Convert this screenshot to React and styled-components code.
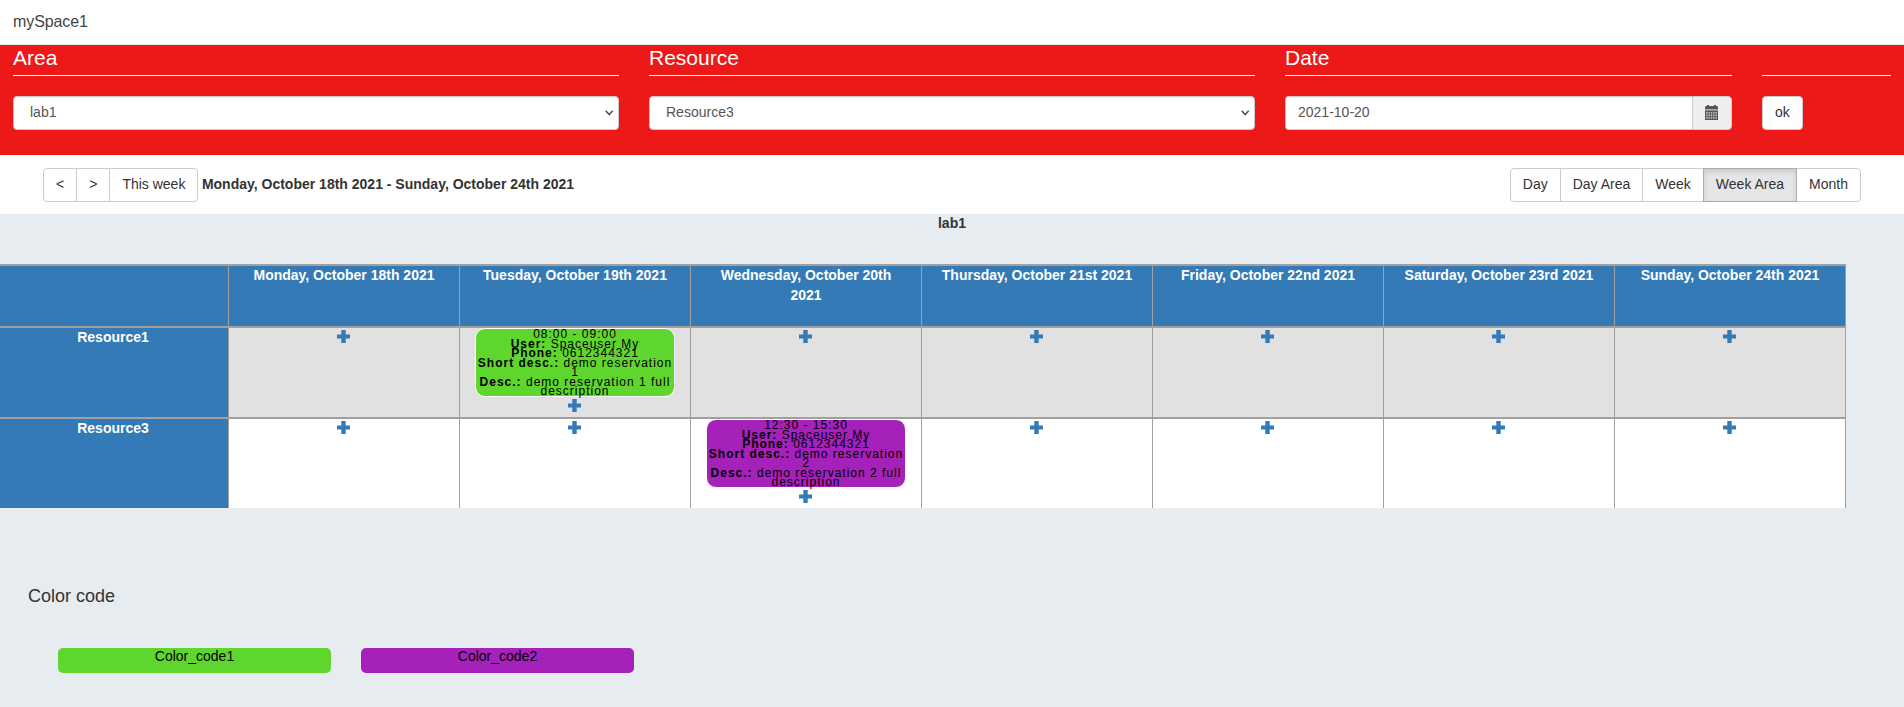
import React from "react";
import styled, { createGlobalStyle, css } from "styled-components";

const Global = createGlobalStyle`
  *, *::before, *::after { box-sizing: border-box; }
  html { background: #e7ecf0; }
  body {
    margin: 0;
    overflow: hidden;
    background: #e7ecf0;
    color: #333;
    font: 14px/20px "Liberation Sans", Arial, sans-serif;
  }
`;

const Header = styled.header`
  height: 45px;
  padding: 12px 13px 0;
  background: #fff;
  border-bottom: 1px solid #e7e7e7;
  color: #444;
  font-size: 16px;
  letter-spacing: -0.1px;
`;

const FilterBar = styled.section`
  display: grid;
  grid-template-columns: 606px 606px 447px 129px;
  column-gap: 30px;
  align-content: start;
  height: 110px;
  padding: 0 13px;
  background: #ed1818;
`;

const Filter = styled.div`
  display: flex;
  flex-direction: column;
  align-items: stretch;
`;

const FilterTitle = styled.h2`
  height: 31px;
  margin: 0 0 20px;
  padding-top: 1px;
  border-bottom: 1px solid #fff;
  color: #fff;
  font-size: 21px;
  font-weight: 400;
  line-height: 23px;
`;

const control = css`
  height: 34px;
  padding: 5px 12px 7px;
  border: 1px solid #ccc;
  border-radius: 4px;
  background: #fff;
  font: 14px/20px "Liberation Sans", Arial, sans-serif;
`;

const SelectBox = styled.div`
  display: grid;
  grid-template-columns: 1fr 14px;
  > svg {
    grid-area: 1 / 2;
    align-self: center;
    pointer-events: none;
  }
`;

const Select = styled.select`
  ${control}
  grid-area: 1 / 1 / 2 / 3;
  appearance: none;
  padding-left: 16px;
  color: #555;
  box-shadow: inset 0 1px 1px rgba(0, 0, 0, 0.075);
`;

const InputGroup = styled.div`
  display: flex;
`;

const DateInput = styled.input`
  ${control}
  flex: 1;
  min-width: 0;
  color: #555;
  border-right: 0;
  border-radius: 4px 0 0 4px;
  box-shadow: inset 0 1px 1px rgba(0, 0, 0, 0.075);
`;

const Addon = styled.span`
  width: 40px;
  height: 34px;
  padding: 8px 0 0 12px;
  border: 1px solid #ccc;
  border-radius: 0 4px 4px 0;
  background: #eee;
  svg { display: block; }
`;

const Button = styled.button`
  ${control}
  align-self: flex-start;
  color: #333;
  white-space: nowrap;
  ${(p) => p.$active && css`
    position: relative;
    background: #e6e6e6;
    border-color: #adadad;
    box-shadow: inset 0 3px 5px rgba(0, 0, 0, 0.125);
  `}
`;

const ButtonGroup = styled.div`
  display: flex;
  ${Button} + ${Button} { margin-left: -1px; }
  ${Button}:not(:first-child) { border-top-left-radius: 0; border-bottom-left-radius: 0; }
  ${Button}:not(:last-child) { border-top-right-radius: 0; border-bottom-right-radius: 0; }
`;

const Toolbar = styled.nav`
  display: flex;
  align-items: flex-start;
  gap: 3.500px;
  height: 59px;
  padding: 13px 43px 0;
  background: #fff;
`;

const Period = styled.strong`
  flex: 1;
  padding-top: 6px;
`;

const AreaTitle = styled.div`
  height: 50px;
  line-height: 18px;
  text-align: center;
  font-weight: 700;
`;

const Schedule = styled.div`
  display: grid;
  grid-template-columns: 229px repeat(7, 231px);
  grid-template-rows: 64px 91px 89px;
  width: 1846px;
`;

const Cell = styled.div`
  display: flex;
  flex-direction: column;
  align-items: center;
  border-right: 1px solid #a0a0a0;
  border-bottom: ${(p) => (p.$last ? 0 : 2)}px solid #a0a0a0;
  background: ${(p) => (p.$shaded ? "#e1e1e1" : "#fff")};
`;

const HeadCell = styled(Cell)`
  padding: 0 15px;
  border-top: ${(p) => (p.$day ? 2 : 0)}px solid #a0a0a0;
  background: #337ab7;
  color: #fff;
  font-weight: 700;
  text-align: center;
`;

const HeadLabel = styled.span`
  margin-top: -1px;
`;

const ResourceLabel = styled(HeadLabel)`
  margin-right: 2px;
`;

const AddLink = styled.a`
  display: block;
  width: 14px;
  height: 20px;
  padding-top: 2px;
  svg { display: block; }
`;

const Booking = styled.div`
  width: 200px;
  height: 69px;
  padding-top: 1px;
  border: 1px solid #fff;
  border-radius: 10px;
  background: ${(p) => p.$color};
  color: #000;
  font-size: 12px;
  line-height: 9.5px;
  letter-spacing: 1px;
  text-align: center;
`;

const Legend = styled.section`
  padding: 78px 28px 0;
`;

const LegendTitle = styled.h3`
  margin: 0;
  height: 42px;
  border-bottom: 1px solid #eee;
  font-size: 18px;
  font-weight: 400;
  line-height: 20px;
`;

const LegendItems = styled.div`
  display: flex;
  gap: 30px;
  padding: 20px 30px 0;
`;

const Swatch = styled.div`
  width: 273px;
  height: 25px;
  border-radius: 5px;
  background: ${(p) => p.$color};
  color: #000;
  line-height: 16px;
  text-align: center;
`;

const GREEN = "#5fd62e";
const PURPLE = "#a521ba";

const days = [
  "Monday, October 18th 2021",
  "Tuesday, October 19th 2021",
  "Wednesday, October 20th 2021",
  "Thursday, October 21st 2021",
  "Friday, October 22nd 2021",
  "Saturday, October 23rd 2021",
  "Sunday, October 24th 2021",
];

const resources = [
  { name: "Resource1", day: 1, time: "08:00 - 09:00", n: 1, color: GREEN },
  { name: "Resource3", day: 2, time: "12:30 - 15:30", n: 2, color: PURPLE },
];

const views = ["Day", "Day Area", "Week", "Week Area", "Month"];

const PlusIcon = () => (
  <svg width="14" height="14" viewBox="0 0 14 14" fill="#337ab7">
    <path d="M4.300 0h4.400v4.600H13v3.900H8.700V13H4.300V8.500H0V4.600h4.300z" />
  </svg>
);

const ChevronIcon = () => (
  <svg width="9" height="6" viewBox="0 0 9 6" fill="none" stroke="#555" strokeWidth="1.600">
    <path d="M0.700 0.800L4.200 4.500L7.700 0.800" />
  </svg>
);

const CalendarIcon = () => (
  <svg width="14" height="15" viewBox="0 0 14 15">
    <path fill="#555" d="M1 1h1V0h2v1h5V0h2v1h1l1 1v2H0V2z" />
    <path fill="#aaa" d="M0 4h13v1.500H0z" />
    <path fill="#555" d="M0 5.500h13V15H0z" />
    {[7.200, 9.700, 12.200].map((y) =>
      [1.200, 3.500, 5.800, 8.100, 10.400].map((x) => (
        <rect key={`${x}-${y}`} x={x} y={y} width="1.400" height="1.400" fill="#ddd" />
      ))
    )}
  </svg>
);

function BookingCard({ item }) {
  return (
    <Booking $color={item.color}>
      {item.time}<br />
      <b>User:</b> Spaceuser My<br />
      <b>Phone:</b> 0612344321<br />
      <b>Short desc.:</b> demo reservation {item.n}<br />
      <b>Desc.:</b> demo reservation {item.n} full description
    </Booking>
  );
}

function SelectFilter({ title, value }) {
  return (
    <Filter>
      <FilterTitle>{title}</FilterTitle>
      <SelectBox>
        <Select><option>{value}</option></Select>
        <ChevronIcon />
      </SelectBox>
    </Filter>
  );
}

export default function App() {
  return (
    <>
      <Global />
      <Header>mySpace1</Header>
      <FilterBar>
        <SelectFilter title="Area" value="lab1" />
        <SelectFilter title="Resource" value="Resource3" />
        <Filter>
          <FilterTitle>Date</FilterTitle>
          <InputGroup>
            <DateInput defaultValue="2021-10-20" />
            <Addon><CalendarIcon /></Addon>
          </InputGroup>
        </Filter>
        <Filter>
          <FilterTitle />
          <Button>ok</Button>
        </Filter>
      </FilterBar>
      <Toolbar>
        <ButtonGroup>
          <Button>&lt;</Button>
          <Button>&gt;</Button>
          <Button>This week</Button>
        </ButtonGroup>
        <Period>Monday, October 18th 2021 - Sunday, October 24th 2021</Period>
        <ButtonGroup>
          {views.map((v) => <Button key={v} $active={v === "Week Area"}>{v}</Button>)}
        </ButtonGroup>
      </Toolbar>
      <AreaTitle>lab1</AreaTitle>
      <Schedule>
        <HeadCell $day />
        {days.map((d) => <HeadCell key={d} $day><HeadLabel>{d}</HeadLabel></HeadCell>)}
        {resources.map((r, row) => (
          <React.Fragment key={r.name}>
            <HeadCell $last={row === 1}><ResourceLabel>{r.name}</ResourceLabel></HeadCell>
            {days.map((d, col) => (
              <Cell key={d} $shaded={row === 0} $last={row === 1}>
                {col === r.day && <BookingCard item={r} />}
                <AddLink><PlusIcon /></AddLink>
              </Cell>
            ))}
          </React.Fragment>
        ))}
      </Schedule>
      <Legend>
        <LegendTitle>Color code</LegendTitle>
        <LegendItems>
          <Swatch $color={GREEN}>Color_code1</Swatch>
          <Swatch $color={PURPLE}>Color_code2</Swatch>
        </LegendItems>
      </Legend>
    </>
  );
}
